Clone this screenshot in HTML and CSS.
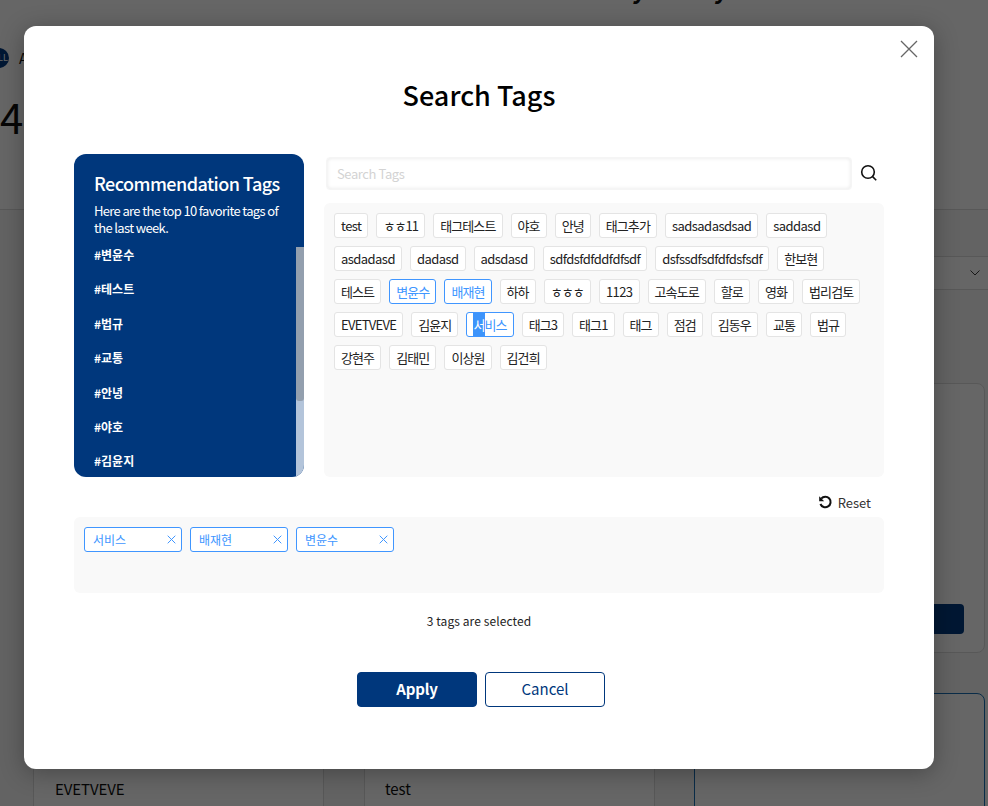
FILE: index.html
```html
<!DOCTYPE html>
<html lang="en">
<head>
    <meta charset="UTF-8">
    <title>Search Tags</title>
    <link rel="stylesheet" href="styles.css">
</head>
<body>
    <div class="page">
        <div class="page-top">
            <div class="page-title-cut"><span>y</span><span>y</span></div>
            <div class="owner"><span class="owner-dot">LL</span><span>A</span></div>
            <div class="big-num">4</div>
        </div>
        <div class="filter-bar">
            <svg class="chev" width="10" height="6" viewBox="0 0 10 6"><path d="M0.5 0.5L5 5L9.5 0.5" fill="none" stroke="#3c3c3c" stroke-width="1"/></svg>
        </div>
        <div class="side-card"><div class="side-btn"></div></div>
        <div class="side-card-blue"></div>
        <div class="grid-row">
            <div class="cell cell-a">EVETVEVE</div>
            <div class="cell cell-b">test</div>
        </div>
    </div>
    <div class="overlay"></div>

    <div class="modal">
        <button class="close" aria-label="Close">
            <svg width="18" height="18" viewBox="0 0 18 18"><path d="M1 1l16 16M17 1L1 17" stroke="#666" stroke-width="1.3" fill="none"/></svg>
        </button>
        <h1>Search Tags</h1>

        <div class="top-row">
            <div class="rec">
                <div class="rec-head">
                    <h2>Recommendation Tags</h2>
                    <p>Here are the top 10 favorite tags of the last week.</p>
                </div>
                <ul class="rec-list">
                    <li>#변윤수</li>
                    <li>#테스트</li>
                    <li>#법규</li>
                    <li>#교통</li>
                    <li>#안녕</li>
                    <li>#야호</li>
                    <li>#김윤지</li>
                </ul>
                <div class="scroll-track"><div class="scroll-thumb"></div></div>
            </div>

            <div class="browse">
                <div class="search-row">
                    <input class="search" type="text" placeholder="Search Tags">
                    <svg class="search-icon" width="18" height="18" viewBox="0 0 18 18"><circle cx="8" cy="8" r="6.3" fill="none" stroke="#111" stroke-width="1.6"/><path d="M12.6 12.6l3.6 3.6" stroke="#111" stroke-width="1.6" fill="none"/></svg>
                </div>
                <div class="tags">
                    <span class="tag lat">test</span>
                    <span class="tag">ㅎㅎ11</span>
                    <span class="tag">태그테스트</span>
                    <span class="tag">야호</span>
                    <span class="tag">안녕</span>
                    <span class="tag">태그추가</span>
                    <span class="tag lat">sadsadasdsad</span>
                    <span class="tag lat">saddasd</span>
                    <span class="tag lat">asdadasd</span>
                    <span class="tag lat">dadasd</span>
                    <span class="tag lat">adsdasd</span>
                    <span class="tag lat">sdfdsfdfddfdfsdf</span>
                    <span class="tag lat">dsfssdfsdfdfdsfsdf</span>
                    <span class="tag">한보현</span>
                    <span class="tag">테스트</span>
                    <span class="tag on">변윤수</span>
                    <span class="tag on">배재현</span>
                    <span class="tag">하하</span>
                    <span class="tag">ㅎㅎㅎ</span>
                    <span class="tag lat">1123</span>
                    <span class="tag">고속도로</span>
                    <span class="tag">할로</span>
                    <span class="tag">영화</span>
                    <span class="tag">법리검토</span>
                    <span class="tag lat caps">EVETVEVE</span>
                    <span class="tag">김윤지</span>
                    <span class="tag on"><span class="sel">서</span>비스</span>
                    <span class="tag">태그3</span>
                    <span class="tag">태그1</span>
                    <span class="tag">태그</span>
                    <span class="tag">점검</span>
                    <span class="tag">김동우</span>
                    <span class="tag">교통</span>
                    <span class="tag">법규</span>
                    <span class="tag">강현주</span>
                    <span class="tag">김태민</span>
                    <span class="tag">이상원</span>
                    <span class="tag">김건희</span>
                </div>
            </div>
        </div>

        <div class="reset-row">
            <button class="reset">
                <svg width="15" height="15" viewBox="0 0 15 15"><path d="M3.2 3.6A5.3 5.3 0 1 1 2.4 9" fill="none" stroke="#111" stroke-width="2"/><path d="M1.2 1.2v5h5z" fill="#111"/></svg>
                Reset
            </button>
        </div>

        <div class="picked">
            <span class="pick">서비스<svg width="9" height="9" viewBox="0 0 9 9"><path d="M.7.7l7.6 7.6M8.3.7L.7 8.3" stroke="#4096ff" fill="none"/></svg></span>
            <span class="pick">배재현<svg width="9" height="9" viewBox="0 0 9 9"><path d="M.7.7l7.6 7.6M8.3.7L.7 8.3" stroke="#4096ff" fill="none"/></svg></span>
            <span class="pick">변윤수<svg width="9" height="9" viewBox="0 0 9 9"><path d="M.7.7l7.6 7.6M8.3.7L.7 8.3" stroke="#4096ff" fill="none"/></svg></span>
        </div>

        <p class="count">3 tags are selected</p>

        <div class="actions">
            <button class="btn btn-apply">Apply</button>
            <button class="btn btn-cancel">Cancel</button>
        </div>
    </div>
</body>
</html>
```
FILE: styles.css
```css
* {
    box-sizing: border-box;
}

html, body {
    margin: 0;
    padding: 0;
    height: 806px;
    overflow: hidden;
}

body {
    font-family: "Noto Sans CJK KR", "Noto Sans", sans-serif;
    color: #111;
    background-color: #fff;
    position: relative;
}

/* page behind the dialog */
.page {
    height: 806px;
    position: relative;
    overflow: hidden;
    background-color: #f7f7f7;
}

.page-top {
    height: 210px;
    border-bottom: 1px solid #ddd;
    background-color: #fff;
}

.page-title-cut {
    position: absolute;
    top: -29px;
    left: 632px;
    display: flex;
    gap: 68px;
    font-size: 24px;
    font-weight: 700;
}

.owner {
    position: absolute;
    top: 48px;
    left: -11px;
    display: flex;
    align-items: center;
    gap: 10px;
    font-size: 14px;
}

.owner-dot {
    width: 20px;
    height: 20px;
    padding-left: 9px;
    border-radius: 50%;
    background-color: #003a80;
    color: #fff;
    font-size: 9px;
    line-height: 20px;
}

.big-num {
    position: absolute;
    top: 87px;
    left: 0;
    font-size: 42px;
    line-height: 58px;
}

.filter-bar {
    position: absolute;
    top: 256px;
    right: 0;
    width: 100px;
    height: 34px;
    background-color: #fff;
    border-top: 1px solid #ddd;
    border-bottom: 1px solid #ddd;
}

.chev {
    position: absolute;
    top: 13px;
    left: 82px;
}

.side-card {
    position: absolute;
    top: 383px;
    left: 880px;
    width: 105px;
    height: 270px;
    background-color: #fff;
    border: 1px solid #ddd;
    border-radius: 8px;
}

.side-btn {
    position: absolute;
    top: 220px;
    right: 20px;
    width: 80px;
    height: 30px;
    background-color: #003a80;
    border-radius: 4px;
}

.side-card-blue {
    position: absolute;
    top: 693px;
    left: 694px;
    width: 291px;
    height: 140px;
    background-color: #fff;
    border: 1px solid #1a6fb5;
    border-radius: 8px;
}

.grid-row {
    position: absolute;
    top: 760px;
    left: 33px;
    display: flex;
    gap: 40px;
}

.cell {
    height: 60px;
    width: 291px;
    padding: 17px 21px 0;
    font-size: 15px;
    letter-spacing: -0.1px;
    background-color: #fff;
    border: 1px solid #ddd;
}

.cell-b {
    padding-left: 20px;
}

.overlay {
    position: absolute;
    inset: 0;
    background-color: rgba(0, 0, 0, 0.6);
}

/* dialog */
.modal {
    position: absolute;
    top: 26px;
    left: 24px;
    width: 910px;
    height: 743px;
    padding: 0 50px;
    background-color: #fff;
    border-radius: 12px;
    box-shadow: 0 4px 24px rgba(0, 0, 0, 0.3);
}

.close {
    position: absolute;
    top: 14px;
    right: 16px;
    padding: 0;
    border: none;
    background: none;
    line-height: 0;
}

h1 {
    margin: 0;
    padding-top: 47px;
    height: 128px;
    text-align: center;
    font-size: 27px;
    line-height: 44px;
    font-weight: 500;
    color: #000;
}

.top-row {
    display: flex;
    gap: 20px;
}

.rec {
    position: relative;
    width: 230px;
    height: 323px;
    flex: none;
    overflow: hidden;
    background-color: #00377c;
    border-radius: 12px;
    color: #fff;
}

.rec-head {
    padding: 16px 20px 0;
}

.rec h2 {
    margin: 0;
    font-size: 18px;
    line-height: 27px;
    font-weight: 500;
    letter-spacing: -0.55px;
    white-space: nowrap;
}

.rec p {
    margin: 5px 0 0;
    font-size: 13px;
    line-height: 17px;
    letter-spacing: -0.65px;
}

.rec-list {
    list-style: none;
    margin: 0;
    padding: 7px 20px 0;
}

.rec-list li {
    height: 34.4px;
    padding-top: 3px;
    font-size: 12px;
    line-height: 17px;
    font-weight: 700;
}

.scroll-track {
    position: absolute;
    top: 93px;
    right: 0;
    bottom: 0;
    width: 8px;
    background-color: #b3c4da;
}

.scroll-thumb {
    height: 154px;
    background-color: #939fae;
    border-radius: 0 0 3px 3px;
}

.browse {
    flex: 1;
}

.search-row {
    display: flex;
    align-items: flex-start;
    padding: 3px 0 0 2px;
    height: 49px;
}

.search {
    width: 526px;
    height: 33px;
    padding: 0 10px;
    border: 1px solid #f5f5f5;
    border-radius: 4px;
    outline: none;
    box-shadow: inset 0 0 4px rgba(0, 0, 0, 0.1);
    font-family: inherit;
    font-size: 13px;
    letter-spacing: -0.4px;
    background-color: #fff;
}

.search::placeholder {
    color: #d3d3d3;
}

.search-icon {
    margin: 7px 0 0 8px;
}

.tags {
    display: flex;
    flex-wrap: wrap;
    align-content: flex-start;
    gap: 8px;
    height: 274px;
    padding: 10px;
    background-color: #f9f9f9;
    border-radius: 6px;
}

.tag {
    height: 25px;
    padding: 0 6px;
    font-size: 13px;
    line-height: 23px;
    letter-spacing: -0.9px;
    color: #222;
    background-color: #fff;
    border: 1px solid #e4e4e4;
    border-radius: 3px;
}

.tag.lat {
    letter-spacing: -0.55px;
}

.tag.caps {
    letter-spacing: -0.7px;
}

.tag.on {
    color: #4096ff;
    border-color: #4096ff;
}

.sel {
    display: inline-block;
    height: 23px;
    color: #fff;
    background-color: #3d94fb;
}

.reset-row {
    display: flex;
    justify-content: flex-end;
    height: 40px;
    padding: 16px 13px 0 0;
}

.reset {
    display: flex;
    align-items: center;
    gap: 5px;
    height: 18px;
    padding: 0;
    border: none;
    background: none;
    font-family: inherit;
    font-size: 13px;
    color: #333;
}

.picked {
    display: flex;
    gap: 8px;
    height: 76px;
    padding: 10px;
    background-color: #f9f9f9;
    border-radius: 6px;
}

.pick {
    display: flex;
    align-items: center;
    justify-content: space-between;
    width: 98px;
    height: 25px;
    padding: 0 5px 0 8px;
    font-size: 12px;
    color: #4096ff;
    background-color: #fff;
    border: 1px solid #4096ff;
    border-radius: 3px;
}

.count {
    margin: 18px 0 0;
    text-align: center;
    font-size: 12px;
    line-height: 20px;
    letter-spacing: 0.1px;
    color: #222;
}

.actions {
    display: flex;
    justify-content: center;
    gap: 8px;
    margin-top: 41px;
    padding-left: 4px;
}

.btn {
    width: 120px;
    height: 35px;
    padding: 0 0 2px;
    border-radius: 4px;
    font-family: inherit;
    font-size: 15px;
    border: 1px solid #00377c;
}

.btn-apply {
    background-color: #00377c;
    color: #fff;
    font-weight: 700;
    letter-spacing: -0.2px;
}

.btn-cancel {
    background-color: #fff;
    color: #00377c;
}
```
